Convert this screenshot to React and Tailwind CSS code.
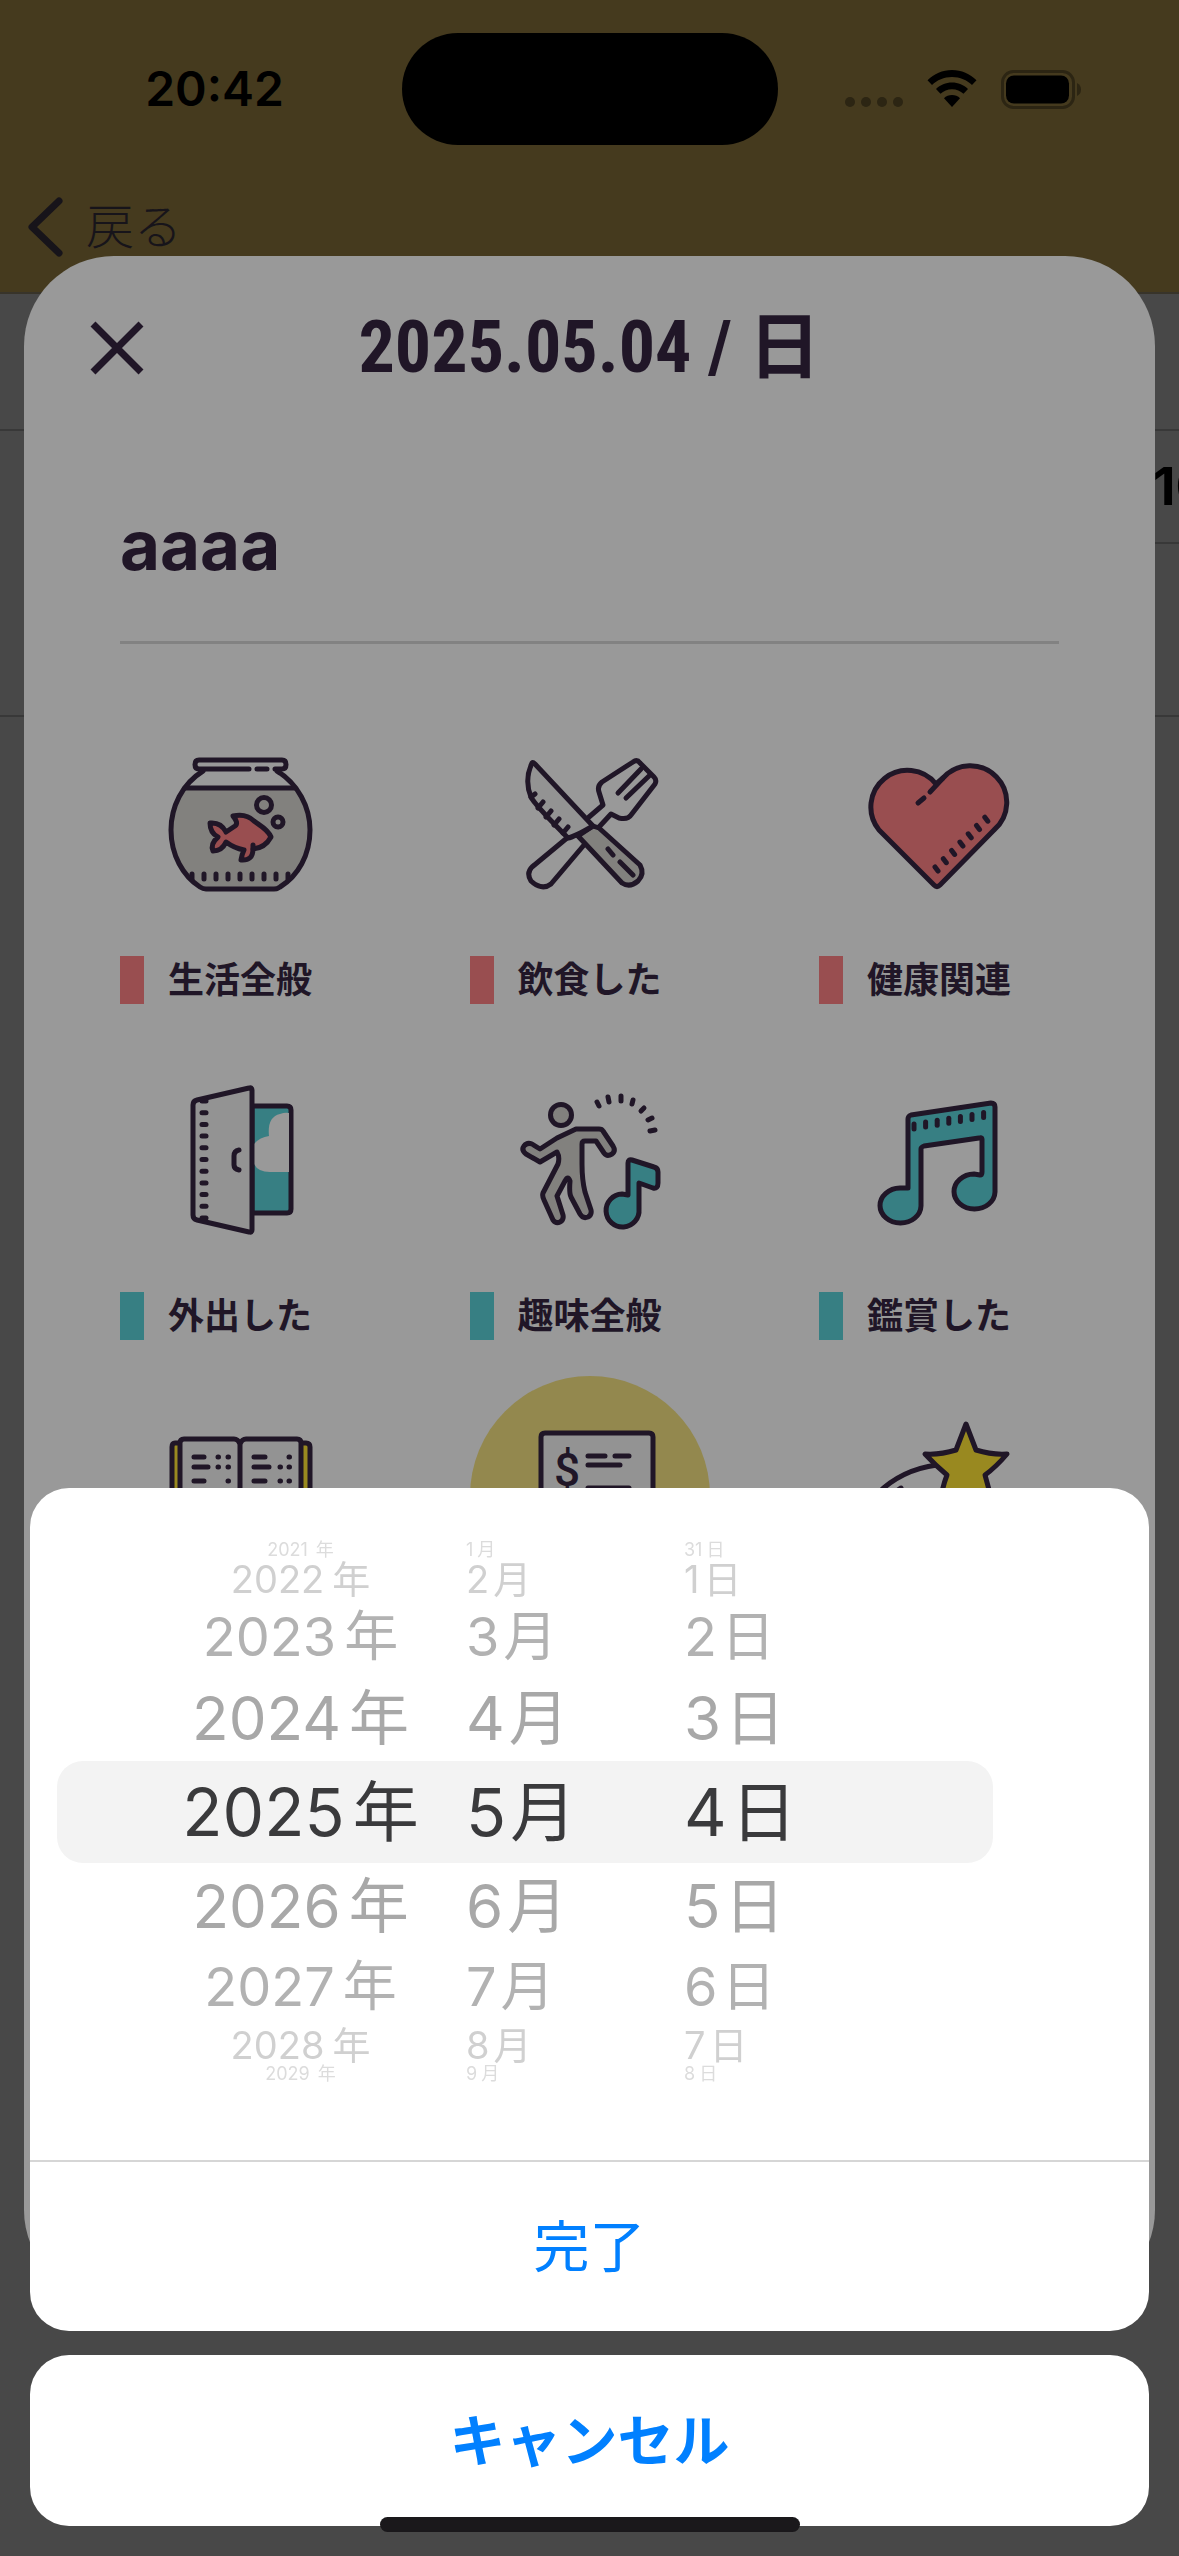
import React, { useState } from 'react';

const INK = '#201627';
const GREY = '#82817e';
const PAPER = '#939393';
const RED = '#994e50';
const TEAL = '#377f83';
const YELLOW = '#998920';

const Art = ({ children }) => (
  <svg
    viewBox="0 0 240 240"
    className="size-full"
    fill="none"
    stroke={INK}
    strokeWidth="5"
    strokeLinecap="round"
    strokeLinejoin="round"
    aria-hidden="true"
  >
    {children}
  </svg>
);

const FishBowl = () => (
  <Art>
    <path d="M65 84H175C187 99 190 114 190 126C190 153 178 174 160 183Q158 185 154 185H86Q82 185 80 183C62 174 51 153 51 126C51 114 55 97 65 84Z" fill={GREY} stroke="none" />
    <path d="M83 67C62 80 51 103 51 126C51 151 63 172 80 183Q83 185 86 185H154Q157 185 160 183C178 172 190 151 190 126C190 103 178 80 157 67" />
    <path d="M129 65H79Q75 65 75 60.500Q75 56 79 56H162Q166 56 166 60.500Q166 65 162 65H155M137 65H147M65 84H175" />
    <path d="M72 170v5M84 170v5M96 170v5M108 170v5M120 170v5M132 170v5M144 170v5M156 170v5M168 170v5" />
    <circle cx="144" cy="101" r="7.500" />
    <circle cx="158" cy="118" r="5" />
    <path d="M151 133C148 125 139 121 134 117Q126 109 113 112Q119 119 115 122L106 128Q101 118 90 119Q90 129 98 133Q90 140 93 147Q102 147 106 138Q114 144 124 146Q122 150 121 156Q133 157 133 145Q145 144 151 133Z" fill={RED} />
    <path d="M133 145V141" />
  </Art>
);

const KnifeFork = () => (
  <Art>
    <path d="M119 113L133 101L129 88Q127 82 132 78L163 58Q167 55 170 59L184 73Q187 76 185 80L161 111Q158 116 149 114L141 110L129 123M97 134L62 163Q56 169 61 177Q72 187 81 180L114 141" />
    <path d="M171 65L148 89M179 72L156 94" />
    <path d="M108 132L152 179Q160 184 168 177Q175 170 170 161L129 124L123 122Z" fill={GREY} />
    <path d="M62 59Q54 76 61 93Q64 100 98 134Q104 133 123 122L65 60Q63 58 62 59Z" fill={PAPER} />
    <path d="M61 93L65 90M68 104L73 98M76 113L81 107M84 121L89 115M93 129L98 123M138 145L143 151M150 158L163 171" />
  </Art>
);

const Heart = () => (
  <Art>
    <path d="M117 80A36.500 36.500 0 1 0 60 126L115 181Q118 184 121 181L175 126A36.500 36.500 0 1 0 124 74L117 80Z" fill={RED} />
    <path d="M124 74L111 88M105 94L99 99" />
    {[0, 1, 2, 3, 4, 5, 6].map((i) => (
      <path key={i} d="M116 163L119 167" transform={`translate(${i * 8.3} ${i * -8.3})`} />
    ))}
  </Art>
);

const Door = () => (
  <Art>
    <path d="M132 66H167Q171 66 171 70V169Q171 173 167 173H132Z" fill={TEAL} />
    <path d="M134 104Q140 97 149 96Q147 77 160 74Q165 72 169 73V132H150Q138 132 134 124Z" fill="#999999" stroke="none" />
    <path d="M77 60L129 48Q132 47 132 50V190Q132 193 129 192L77 180Q73 179 73 175V65Q73 61 77 60Z" fill={PAPER} />
    {[0, 1, 2, 3, 4, 5, 6, 7, 8, 9, 10].map((i) => (
      <path key={i} d="M82 61H86" transform={`translate(0 ${i * 11.7})`} />
    ))}
    <path d="M119 110Q114 111 114 116V125Q114 129 119 130" />
  </Art>
);

const Dancer = () => (
  <Art>
    <circle cx="91" cy="75" r="10.500" fill={GREY} />
    <path d="M106 89H129Q132 89 133 91L143 106Q146 111 142 114Q137 117 134 113L126 101H115Q112 101 112 104V124Q112 140 115 152L121 170Q122 175 118 177Q113 179 110 174L101 157Q99 153 100 141Q98 135 95 141L87 156L93 175Q94 180 90 182Q86 184 83 180L74 160Q72 156 73 153L88 124Q90 117 87 112L70 122L56 114Q51 110 54 106Q57 102 62 104L70 109L87 98Z" fill={GREY} />
    <path d="M127 62L129 66M138 57L139 62M151 56V61M163 60L162 64M174 68L171 71M182 78L178 80M185 90L180 91" />
    <path d="M158 155V123Q158 119 162 120L184 127Q188 128 188 132V143Q188 149 183 148L169 143V169A16.500 16.500 0 1 1 152 154Z" fill={TEAL} />
  </Art>
);

const Music = () => (
  <Art>
    <path d="M89 148V79Q89 76 92 75L172 63Q176 63 176 67V152A20.500 17.500 0 1 1 155 134L161 135Q163 135 163 132V99Q163 97 160 98L105 106Q102 107 102 109V166A20.500 17.500 0 1 1 81 148Z" fill={TEAL} />
    {[0, 1, 2, 3, 4, 5, 6].map((i) => (
      <path key={i} d="M95 84V89" transform={`translate(${i * 11.6} ${i * -1.9})`} />
    ))}
  </Art>
);

const Book = () => (
  <Art>
    <path d="M60 67H55Q52 67 52 71V180H190V71Q190 67 186 67H181" fill={YELLOW} />
    <path d="M120 68Q118 63 114 63H64Q60 63 60 67V174H181V67Q181 63 177 63H126Q122 63 120 68ZM120 68V174" fill={PAPER} />
    <path d="M74 81H84M98 81H98.500M108 81H108.500M74 91H88M98 91H98.500M108 91H108.500M74 105H84M108 105H108.500M134 81H145M169 81H169.500M134 91H149M160 91H160.500M169 91H169.500M134 105H145M160 105H160.500M169 105H169.500" />
  </Art>
);

const Bill = () => (
  <Art>
    <path d="M75 57H179Q183 57 183 61V184H71V61Q71 57 75 57Z" fill={PAPER} />
    <text x="97" y="110" textAnchor="middle" fontSize="46" fontWeight="500" fontFamily="Roboto, sans-serif" fill={INK} stroke="none">$</text>
    <path d="M118 80H135M145 80H159M118 89H150M118 112H159" />
  </Art>
);

const ShootingStar = () => (
  <Art>
    <path d="M118 89C95 92 75 101 58 118M82 112Q75 116 70 122" />
    <path d="M147 48L157 74Q173 79 188 78Q177 91 166 99Q170 112 173 128L147 116L121 128Q123 112 128 99Q117 90 106 78Q121 79 137 74Z" fill={YELLOW} />
  </Art>
);

const categories = [
  { label: '生活全般', art: FishBowl, bar: 'bg-[#994e50]' },
  { label: '飲食した', art: KnifeFork, bar: 'bg-[#994e50]' },
  { label: '健康関連', art: Heart, bar: 'bg-[#994e50]' },
  { label: '外出した', art: Door, bar: 'bg-[#377f83]' },
  { label: '趣味全般', art: Dancer, bar: 'bg-[#377f83]' },
  { label: '鑑賞した', art: Music, bar: 'bg-[#377f83]' },
  { label: '勉強した', art: Book, bar: 'bg-[#998920]' },
  { label: '買い物', art: Bill, bar: 'bg-[#998920]', selected: true },
  { label: '特別な日', art: ShootingStar, bar: 'bg-[#998920]' },
];

// Row styles of the wheel, from the top edge to the bottom edge
const wheelRows = [
  'h-[18px] text-[18px] text-[#dcdcdc]',
  'h-10 text-[38px] text-[#d0d0d0]',
  'h-[76px] text-[54px] text-[#b2b2b2]',
  'h-[86px] text-[60px] text-[#a8a8a8]',
  'h-[102px] bg-[#f3f3f3] text-[66px] text-[#3a3a3c]',
  'h-[86px] text-[60px] text-[#a8a8a8]',
  'h-[76px] text-[54px] text-[#b2b2b2]',
  'h-10 text-[38px] text-[#d0d0d0]',
  'h-[18px] text-[18px] text-[#dcdcdc]',
];

const years = [2021, 2022, 2023, 2024, 2025, 2026, 2027, 2028, 2029];
const months = [1, 2, 3, 4, 5, 6, 7, 8, 9];
const days = [31, 1, 2, 3, 4, 5, 6, 7, 8];

const Wheel = ({ label, values, unit, className, rowClass }) => (
  <div role="listbox" aria-label={label} className={`flex flex-col ${className}`}>
    {values.map((value, i) => (
      <div
        key={value}
        role="option"
        aria-selected={i === 4}
        className={`flex shrink-0 items-center leading-none whitespace-nowrap ${wheelRows[i]} ${rowClass}`}
      >
        <span>{value}</span>
        <span>{unit}</span>
      </div>
    ))}
  </div>
);

const StatusBar = () => (
  <div className="grid h-[178px] grid-cols-3 items-center text-black">
    <span className="pl-9 text-center text-[48px] leading-none font-semibold">20:42</span>
    <div className="h-28 w-[376px] justify-self-center rounded-full bg-black" />
    <div className="flex items-center justify-end gap-6 pr-[98px]">
      <svg className="h-[39px] w-[58px]" viewBox="0 0 58 39" fill="#2c2513" aria-hidden="true">
        <circle cx="5" cy="32" r="5" />
        <circle cx="21" cy="32" r="5" />
        <circle cx="37" cy="32" r="5" />
        <circle cx="53" cy="32" r="5" />
      </svg>
      <svg className="h-[38px] w-[50px]" viewBox="0 0 50 38" aria-hidden="true">
        <path d="M25 0C34.500 0 43 4 49.500 10.200L45 15C40 10 33 7 25 7S10 10 5 15L.5 10.200C7 4 15.500 0 25 0Z" />
        <path d="M25 12.500C31 12.500 37 15 41 19L36.500 23.700C33.500 21 29.500 19.200 25 19.200S16.500 21 13.500 23.700L9 19C13 15 19 12.500 25 12.500Z" />
        <path d="M25 25C28 25 31 26.200 33 28.200L25 37L17 28.200C19 26.200 22 25 25 25Z" />
      </svg>
      <svg className="h-[39px] w-[80px]" viewBox="0 0 80 39" aria-hidden="true">
        <rect x="1.500" y="1.500" width="71" height="36" rx="11" fill="none" stroke="#2c2513" strokeWidth="3" />
        <rect x="5" y="5.500" width="63" height="28" rx="8" />
        <path d="M76 13Q80 15 80 19.500T76 26Z" fill="#2c2513" />
      </svg>
    </div>
  </div>
);

const DiaryPage = () => (
  <div className="overflow-hidden">
    <header className="border-b-2 border-[#38342a] bg-[#453a1e]">
      <StatusBar />
      <div className="flex h-[114px] items-center px-7 pb-4">
        <a href="#back" className="flex items-center gap-[22px] text-[48px] leading-none text-[#17141a]">
          <svg className="h-[60px] w-9" viewBox="0 0 36 60" fill="none" stroke="currentColor" strokeWidth="7" strokeLinecap="round" strokeLinejoin="round" aria-hidden="true">
            <path d="M31 4L4 30L31 56" />
          </svg>
          <span className="font-light">戻る</span>
        </a>
      </div>
    </header>
    <div className="h-[137px] border-b-2 border-[#383838]" />
    <div className="ml-12 flex h-[113px] items-center justify-end border-b-2 border-[#383838]">
      <span className="w-[26px] text-[52px] leading-none font-bold whitespace-nowrap text-black">10</span>
    </div>
    <div className="h-[173px] border-b-2 border-[#383838]" />
  </div>
);

const EntryModal = ({ title, onTitle }) => (
  <section className="fixed inset-x-6 top-64 bottom-64 overflow-hidden rounded-[90px] bg-[#999999] pt-[52px] text-[#201627]">
    <div className="grid h-20 grid-cols-[1fr_auto_1fr] items-center px-[66px]">
      <button type="button" aria-label="閉じる" className="size-[54px]">
        <svg viewBox="0 0 54 54" className="size-full" stroke="currentColor" strokeWidth="7" aria-hidden="true">
          <path d="M3 3L51 51M51 3L3 51" />
        </svg>
      </button>
      <h1 className="font-['Roboto_Condensed','Liberation_Sans_Narrow','Noto_Sans_CJK_JP',sans-serif] text-[72px] leading-none font-bold">2025.05.04 / 日</h1>
    </div>
    <div className="px-24">
      <input
        type="text"
        aria-label="タイトル"
        value={title}
        onChange={(e) => onTitle(e.target.value)}
        className="mt-[61px] h-[195px] w-full border-b-3 border-[#828282] bg-transparent text-[69px] font-bold outline-none"
      />
      <div className="mt-[60px] grid grid-cols-[240px_240px_240px] justify-between gap-y-9">
        {categories.map(({ label, art: Icon, bar, selected }) => (
          <button key={label} type="button" className="flex flex-col gap-3">
            <span className={`block size-60 rounded-full ${selected ? 'bg-[#93884e]' : ''}`}>
              <Icon />
            </span>
            <span className="flex h-12 items-center gap-6 text-[36px] leading-none font-bold whitespace-nowrap">
              <span className={`h-12 w-6 ${bar}`} />
              {label}
            </span>
          </button>
        ))}
      </div>
    </div>
  </section>
);

const DateSheet = () => (
  <div className="fixed inset-x-0 bottom-[30px] flex flex-col gap-6 px-[30px]">
    <div className="rounded-[39px] bg-white">
      <div className="mr-[156px] ml-[27px] flex pt-[53px] pb-[77px]">
        <Wheel label="年" values={years} unit="年" className="w-[409px]" rowClass="justify-center gap-2 rounded-l-[26px] pl-[78px]" />
        <Wheel label="月" values={months} unit="月" className="w-[218px]" rowClass="gap-1" />
        <Wheel label="日" values={days} unit="日" className="flex-1" rowClass="gap-1 rounded-r-[26px]" />
      </div>
      <button type="button" className="h-[171px] w-full border-t-2 border-[#d6d6d6] text-[56px] leading-none text-[#0180ff]">
        完了
      </button>
    </div>
    <button type="button" className="h-[171px] w-full rounded-[39px] bg-white text-[56px] leading-none font-bold text-[#0180ff]">
      キャンセル
    </button>
  </div>
);

const App = () => {
  const [title, setTitle] = useState('aaaa');

  return (
    <div className="min-h-screen bg-[#484848] font-[Inter,'Noto_Sans_CJK_JP',sans-serif]">
      <DiaryPage />
      <EntryModal title={title} onTitle={setTitle} />
      <DateSheet />
      {/* Home indicator */}
      <div className="fixed inset-x-0 bottom-6 mx-auto h-[15px] w-[420px] rounded-full bg-[#1a181b]" />
    </div>
  );
};

export default App;
